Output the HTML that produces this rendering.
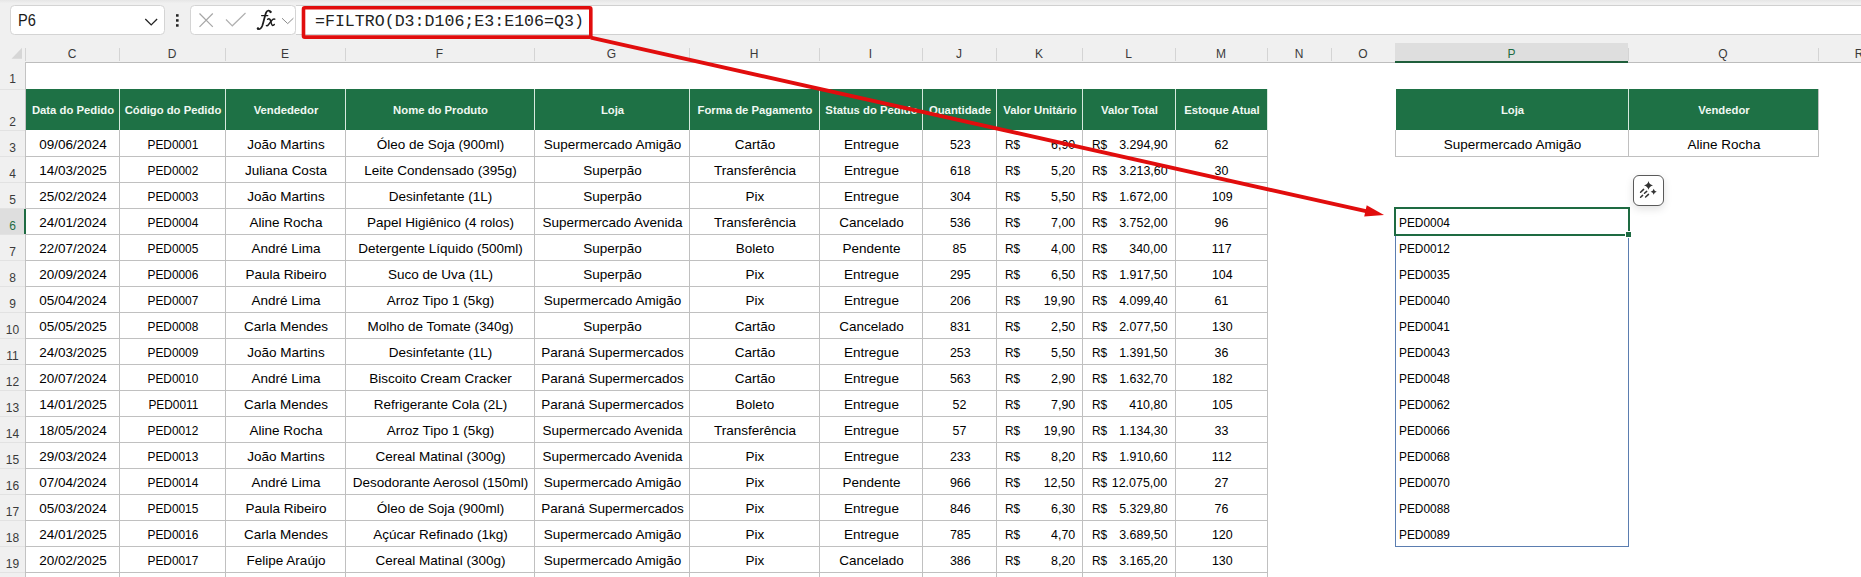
<!DOCTYPE html>
<html><head><meta charset="utf-8"><style>
*{margin:0;padding:0;box-sizing:border-box}
html,body{width:1861px;height:577px;overflow:hidden;background:#fff}
body{position:relative;font-family:"Liberation Sans",sans-serif}
div{position:absolute}
.t{font-size:13.5px;color:#000;white-space:nowrap}
.c{text-align:center}
.h{font-size:11.3px;font-weight:bold;color:#f0f8f2;white-space:nowrap}
.ch{font-size:12px;color:#3a3a3a;white-space:nowrap;text-align:center}
</style></head>
<body>
<div style="left:0;top:0;width:1861px;height:62px;background:#f0f0f0"></div>
<div style="left:0;top:0;width:1861px;height:3px;background:linear-gradient(#e6e6e6,#efefef)"></div>
<div style="left:10px;top:5px;width:154.7px;height:29.5px;background:#fff;border:1px solid #d4d4d4;border-radius:4.5px"></div>
<div style="left:17.5px;top:5.5px;height:29px;line-height:29px;font-size:16px;color:#1a1a1a;white-space:nowrap"><span style="display:inline-block;transform:scaleX(0.91);transform-origin:0 50%">P6</span></div>
<div style="left:189.8px;top:5.3px;width:106.7px;height:29.3px;background:#fff;border:1px solid #d4d4d4;border-radius:4.5px"></div>
<div style="left:296px;top:5px;width:1570px;height:30px;background:#fff;border-top:1px solid #d0d0d0;border-bottom:1px solid #d0d0d0"></div>
<svg style="position:absolute;left:0;top:0" width="310" height="40">
<polyline points="145.3,19 151.2,24.9 157.1,19" fill="none" stroke="#222" stroke-width="1.3"/>
<rect x="176" y="14.2" width="2.6" height="2.5" fill="#222"/>
<rect x="176" y="19.2" width="2.6" height="2.5" fill="#222"/>
<rect x="176" y="24.2" width="2.6" height="2.5" fill="#222"/>
<line x1="199.5" y1="13.5" x2="212.8" y2="26.8" stroke="#a6a6a6" stroke-width="1.2"/>
<line x1="212.8" y1="13.5" x2="199.5" y2="26.8" stroke="#a6a6a6" stroke-width="1.2"/>
<polyline points="226,19.5 232.3,25.8 245.5,13" fill="none" stroke="#b0b0b0" stroke-width="1.2"/>
<polyline points="282,18.2 287.7,23.6 293.4,18.2" fill="none" stroke="#8a8a8a" stroke-width="1"/>
</svg>
<svg style="position:absolute;left:0;top:0" width="300" height="40"><g fill="none" stroke="#1c1c1c" stroke-linecap="round">
<path d="M270.6,11.8 C269.6,10 267.2,10.1 266.2,12.3 C265,15 263.6,22 262.3,25.8 C261.3,28.5 259.6,29.7 257.8,28.7" stroke-width="1.75"/>
<path d="M261.6,15.6 L267.8,15.6" stroke-width="1.3"/>
<path d="M267.6,19.3 C269.4,18 270.3,19.4 270.8,21.5 C271.3,23.8 271.8,25.6 273,25.4 C273.6,25.3 274,24.9 274.3,24.4" stroke-width="1.45"/>
<path d="M274.8,19.2 C273.6,18.6 272.6,19.3 271.5,20.8 L268.6,24.5 C267.9,25.5 267.2,25.9 266.4,25.6" stroke-width="1.45"/>
</g><circle cx="270.5" cy="12" r="1.15" fill="#1c1c1c"/><circle cx="258" cy="28.5" r="1.2" fill="#1c1c1c"/></svg>
<div style="left:315px;top:7px;height:30px;line-height:30px;font-family:'Liberation Mono',monospace;font-size:16.6px;color:#222;white-space:nowrap">=FILTRO(D3:D106;E3:E106=Q3)</div>
<div style="left:0;top:61.5px;width:1861px;height:1px;background:#bdbdbd"></div>
<svg style="position:absolute;left:0;top:40px" width="26" height="22"><polygon points="11.5,18.8 22,18.8 22,7.8" fill="#d6d6d6"/></svg>
<div style="left:0;top:63px;width:2px;height:1px;background:#333"></div>
<div style="left:119px;top:48px;width:1px;height:13px;background:#d4d4d4"></div>
<div style="left:225px;top:48px;width:1px;height:13px;background:#d4d4d4"></div>
<div style="left:345px;top:48px;width:1px;height:13px;background:#d4d4d4"></div>
<div style="left:534px;top:48px;width:1px;height:13px;background:#d4d4d4"></div>
<div style="left:689px;top:48px;width:1px;height:13px;background:#d4d4d4"></div>
<div style="left:819px;top:48px;width:1px;height:13px;background:#d4d4d4"></div>
<div style="left:922px;top:48px;width:1px;height:13px;background:#d4d4d4"></div>
<div style="left:996px;top:48px;width:1px;height:13px;background:#d4d4d4"></div>
<div style="left:1082px;top:48px;width:1px;height:13px;background:#d4d4d4"></div>
<div style="left:1175px;top:48px;width:1px;height:13px;background:#d4d4d4"></div>
<div style="left:1267px;top:48px;width:1px;height:13px;background:#d4d4d4"></div>
<div style="left:1331px;top:48px;width:1px;height:13px;background:#d4d4d4"></div>
<div style="left:1395px;top:48px;width:1px;height:13px;background:#d4d4d4"></div>
<div style="left:1628px;top:48px;width:1px;height:13px;background:#d4d4d4"></div>
<div style="left:1818px;top:48px;width:1px;height:13px;background:#d4d4d4"></div>
<div style="left:1900px;top:48px;width:1px;height:13px;background:#d4d4d4"></div>
<div style="left:1395px;top:43px;width:233px;height:19px;background:#dedede"></div>
<div style="left:1395px;top:60.5px;width:233px;height:2px;background:#1f5e3b"></div>
<div style="left:25px;top:48px;width:1px;height:13px;background:#d4d4d4"></div>
<div class="ch" style="left:25px;top:43px;width:94px;height:19px;line-height:23px;color:#3a3a3a">C</div>
<div class="ch" style="left:119px;top:43px;width:106px;height:19px;line-height:23px;color:#3a3a3a">D</div>
<div class="ch" style="left:225px;top:43px;width:120px;height:19px;line-height:23px;color:#3a3a3a">E</div>
<div class="ch" style="left:345px;top:43px;width:189px;height:19px;line-height:23px;color:#3a3a3a">F</div>
<div class="ch" style="left:534px;top:43px;width:155px;height:19px;line-height:23px;color:#3a3a3a">G</div>
<div class="ch" style="left:689px;top:43px;width:130px;height:19px;line-height:23px;color:#3a3a3a">H</div>
<div class="ch" style="left:819px;top:43px;width:103px;height:19px;line-height:23px;color:#3a3a3a">I</div>
<div class="ch" style="left:922px;top:43px;width:74px;height:19px;line-height:23px;color:#3a3a3a">J</div>
<div class="ch" style="left:996px;top:43px;width:86px;height:19px;line-height:23px;color:#3a3a3a">K</div>
<div class="ch" style="left:1082px;top:43px;width:93px;height:19px;line-height:23px;color:#3a3a3a">L</div>
<div class="ch" style="left:1175px;top:43px;width:92px;height:19px;line-height:23px;color:#3a3a3a">M</div>
<div class="ch" style="left:1267px;top:43px;width:64px;height:19px;line-height:23px;color:#3a3a3a">N</div>
<div class="ch" style="left:1331px;top:43px;width:64px;height:19px;line-height:23px;color:#3a3a3a">O</div>
<div class="ch" style="left:1395px;top:43px;width:233px;height:19px;line-height:23px;color:#1e6b42">P</div>
<div class="ch" style="left:1628px;top:43px;width:190px;height:19px;line-height:23px;color:#3a3a3a">Q</div>
<div class="ch" style="left:1818px;top:43px;width:82px;height:19px;line-height:23px;color:#3a3a3a">R</div>
<div style="left:0;top:62px;width:25px;height:515px;background:#f0f0f0"></div>
<div style="left:25px;top:62px;width:1px;height:515px;background:#c3c3c3"></div>
<div style="left:0;top:208px;width:24px;height:26px;background:#dedede"></div>
<div style="left:24px;top:208px;width:2px;height:26.5px;background:#1e6b42"></div>
<div style="left:0;top:89px;width:25px;height:1px;background:#e2e2e2"></div>
<div class="ch" style="left:0;top:71.4px;width:25px;height:16px;line-height:16px;color:#3a3a3a">1</div>
<div style="left:0;top:130px;width:25px;height:1px;background:#e2e2e2"></div>
<div class="ch" style="left:0;top:113.9px;width:25px;height:16px;line-height:16px;color:#3a3a3a">2</div>
<div style="left:0;top:156px;width:25px;height:1px;background:#e2e2e2"></div>
<div class="ch" style="left:0;top:139.9px;width:25px;height:16px;line-height:16px;color:#3a3a3a">3</div>
<div style="left:0;top:182px;width:25px;height:1px;background:#e2e2e2"></div>
<div class="ch" style="left:0;top:165.9px;width:25px;height:16px;line-height:16px;color:#3a3a3a">4</div>
<div style="left:0;top:208px;width:25px;height:1px;background:#e2e2e2"></div>
<div class="ch" style="left:0;top:191.9px;width:25px;height:16px;line-height:16px;color:#3a3a3a">5</div>
<div style="left:0;top:234px;width:25px;height:1px;background:#e2e2e2"></div>
<div class="ch" style="left:0;top:217.9px;width:25px;height:16px;line-height:16px;color:#1e6b42">6</div>
<div style="left:0;top:260px;width:25px;height:1px;background:#e2e2e2"></div>
<div class="ch" style="left:0;top:243.9px;width:25px;height:16px;line-height:16px;color:#3a3a3a">7</div>
<div style="left:0;top:286px;width:25px;height:1px;background:#e2e2e2"></div>
<div class="ch" style="left:0;top:269.9px;width:25px;height:16px;line-height:16px;color:#3a3a3a">8</div>
<div style="left:0;top:312px;width:25px;height:1px;background:#e2e2e2"></div>
<div class="ch" style="left:0;top:295.9px;width:25px;height:16px;line-height:16px;color:#3a3a3a">9</div>
<div style="left:0;top:338px;width:25px;height:1px;background:#e2e2e2"></div>
<div class="ch" style="left:0;top:321.9px;width:25px;height:16px;line-height:16px;color:#3a3a3a">10</div>
<div style="left:0;top:364px;width:25px;height:1px;background:#e2e2e2"></div>
<div class="ch" style="left:0;top:347.9px;width:25px;height:16px;line-height:16px;color:#3a3a3a">11</div>
<div style="left:0;top:390px;width:25px;height:1px;background:#e2e2e2"></div>
<div class="ch" style="left:0;top:373.9px;width:25px;height:16px;line-height:16px;color:#3a3a3a">12</div>
<div style="left:0;top:416px;width:25px;height:1px;background:#e2e2e2"></div>
<div class="ch" style="left:0;top:399.9px;width:25px;height:16px;line-height:16px;color:#3a3a3a">13</div>
<div style="left:0;top:442px;width:25px;height:1px;background:#e2e2e2"></div>
<div class="ch" style="left:0;top:425.9px;width:25px;height:16px;line-height:16px;color:#3a3a3a">14</div>
<div style="left:0;top:468px;width:25px;height:1px;background:#e2e2e2"></div>
<div class="ch" style="left:0;top:451.9px;width:25px;height:16px;line-height:16px;color:#3a3a3a">15</div>
<div style="left:0;top:494px;width:25px;height:1px;background:#e2e2e2"></div>
<div class="ch" style="left:0;top:477.9px;width:25px;height:16px;line-height:16px;color:#3a3a3a">16</div>
<div style="left:0;top:520px;width:25px;height:1px;background:#e2e2e2"></div>
<div class="ch" style="left:0;top:503.9px;width:25px;height:16px;line-height:16px;color:#3a3a3a">17</div>
<div style="left:0;top:546px;width:25px;height:1px;background:#e2e2e2"></div>
<div class="ch" style="left:0;top:529.9px;width:25px;height:16px;line-height:16px;color:#3a3a3a">18</div>
<div style="left:0;top:572px;width:25px;height:1px;background:#e2e2e2"></div>
<div class="ch" style="left:0;top:555.9px;width:25px;height:16px;line-height:16px;color:#3a3a3a">19</div>
<div style="left:0;top:598px;width:25px;height:1px;background:#e2e2e2"></div>
<div class="ch" style="left:0;top:581.9px;width:25px;height:16px;line-height:16px;color:#3a3a3a">20</div>
<div style="left:25.5px;top:89px;width:1242px;height:41px;background:#1e7145"></div>
<div style="left:25px;top:156px;width:1243px;height:1px;background:#c0c0c0"></div>
<div style="left:25px;top:182px;width:1243px;height:1px;background:#c0c0c0"></div>
<div style="left:25px;top:208px;width:1243px;height:1px;background:#c0c0c0"></div>
<div style="left:25px;top:234px;width:1243px;height:1px;background:#c0c0c0"></div>
<div style="left:25px;top:260px;width:1243px;height:1px;background:#c0c0c0"></div>
<div style="left:25px;top:286px;width:1243px;height:1px;background:#c0c0c0"></div>
<div style="left:25px;top:312px;width:1243px;height:1px;background:#c0c0c0"></div>
<div style="left:25px;top:338px;width:1243px;height:1px;background:#c0c0c0"></div>
<div style="left:25px;top:364px;width:1243px;height:1px;background:#c0c0c0"></div>
<div style="left:25px;top:390px;width:1243px;height:1px;background:#c0c0c0"></div>
<div style="left:25px;top:416px;width:1243px;height:1px;background:#c0c0c0"></div>
<div style="left:25px;top:442px;width:1243px;height:1px;background:#c0c0c0"></div>
<div style="left:25px;top:468px;width:1243px;height:1px;background:#c0c0c0"></div>
<div style="left:25px;top:494px;width:1243px;height:1px;background:#c0c0c0"></div>
<div style="left:25px;top:520px;width:1243px;height:1px;background:#c0c0c0"></div>
<div style="left:25px;top:546px;width:1243px;height:1px;background:#c0c0c0"></div>
<div style="left:25px;top:572px;width:1243px;height:1px;background:#c0c0c0"></div>
<div style="left:25px;top:598px;width:1243px;height:1px;background:#c0c0c0"></div>
<div style="left:119px;top:130px;width:1px;height:450px;background:#c0c0c0"></div>
<div style="left:119px;top:89px;width:1px;height:41px;background:#d7e9de"></div>
<div style="left:225px;top:130px;width:1px;height:450px;background:#c0c0c0"></div>
<div style="left:225px;top:89px;width:1px;height:41px;background:#d7e9de"></div>
<div style="left:345px;top:130px;width:1px;height:450px;background:#c0c0c0"></div>
<div style="left:345px;top:89px;width:1px;height:41px;background:#d7e9de"></div>
<div style="left:534px;top:130px;width:1px;height:450px;background:#c0c0c0"></div>
<div style="left:534px;top:89px;width:1px;height:41px;background:#d7e9de"></div>
<div style="left:689px;top:130px;width:1px;height:450px;background:#c0c0c0"></div>
<div style="left:689px;top:89px;width:1px;height:41px;background:#d7e9de"></div>
<div style="left:819px;top:130px;width:1px;height:450px;background:#c0c0c0"></div>
<div style="left:819px;top:89px;width:1px;height:41px;background:#d7e9de"></div>
<div style="left:922px;top:130px;width:1px;height:450px;background:#c0c0c0"></div>
<div style="left:922px;top:89px;width:1px;height:41px;background:#d7e9de"></div>
<div style="left:996px;top:130px;width:1px;height:450px;background:#c0c0c0"></div>
<div style="left:996px;top:89px;width:1px;height:41px;background:#d7e9de"></div>
<div style="left:1082px;top:130px;width:1px;height:450px;background:#c0c0c0"></div>
<div style="left:1082px;top:89px;width:1px;height:41px;background:#d7e9de"></div>
<div style="left:1175px;top:130px;width:1px;height:450px;background:#c0c0c0"></div>
<div style="left:1175px;top:89px;width:1px;height:41px;background:#d7e9de"></div>
<div style="left:1267px;top:130px;width:1px;height:450px;background:#c0c0c0"></div>
<div style="left:1267px;top:89px;width:1px;height:41px;background:#d7e9de"></div>
<div class="h c" style="left:26px;top:90px;width:94px;height:41px;line-height:41px">Data do Pedido</div>
<div class="h c" style="left:120px;top:90px;width:106px;height:41px;line-height:41px">Código do Pedido</div>
<div class="h c" style="left:226px;top:90px;width:120px;height:41px;line-height:41px">Vendededor</div>
<div class="h c" style="left:346px;top:90px;width:189px;height:41px;line-height:41px">Nome do Produto</div>
<div class="h c" style="left:535px;top:90px;width:155px;height:41px;line-height:41px">Loja</div>
<div class="h c" style="left:690px;top:90px;width:130px;height:41px;line-height:41px">Forma de Pagamento</div>
<div class="h c" style="left:820px;top:90px;width:103px;height:41px;line-height:41px">Status do Pedido</div>
<div class="h c" style="left:923px;top:90px;width:74px;height:41px;line-height:41px">Quantidade</div>
<div class="h c" style="left:997px;top:90px;width:86px;height:41px;line-height:41px">Valor Unitário</div>
<div class="h c" style="left:1083px;top:90px;width:93px;height:41px;line-height:41px">Valor Total</div>
<div class="h c" style="left:1176px;top:90px;width:92px;height:41px;line-height:41px">Estoque Atual</div>
<div class="t c" style="left:26px;top:132.1px;width:94px;height:26px;line-height:26px;">09/06/2024</div>
<div class="t c" style="left:120px;top:132.1px;width:106px;height:26px;line-height:26px;"><span style="display:inline-block;transform:scaleX(0.88);transform-origin:50% 50%">PED0001</span></div>
<div class="t c" style="left:226px;top:132.1px;width:120px;height:26px;line-height:26px;">João Martins</div>
<div class="t c" style="left:346px;top:132.1px;width:189px;height:26px;line-height:26px;">Óleo de Soja (900ml)</div>
<div class="t c" style="left:535px;top:132.1px;width:155px;height:26px;line-height:26px;">Supermercado Amigão</div>
<div class="t c" style="left:690px;top:132.1px;width:130px;height:26px;line-height:26px;">Cartão</div>
<div class="t c" style="left:820px;top:132.1px;width:103px;height:26px;line-height:26px;">Entregue</div>
<div class="t c" style="left:923px;top:132.1px;width:74px;height:26px;line-height:26px;"><span style="display:inline-block;transform:scaleX(0.92);transform-origin:50% 50%">523</span></div>
<div class="t" style="left:1005px;top:132.1px;height:26px;line-height:26px;"><span style="display:inline-block;transform:scaleX(0.88);transform-origin:0 50%">R$</span></div>
<div class="t" style="right:786px;top:132.1px;height:26px;line-height:26px;text-align:right;"><span style="display:inline-block;transform:scaleX(0.92);transform-origin:100% 50%">6,90</span></div>
<div class="t" style="left:1091.5px;top:132.1px;height:26px;line-height:26px;"><span style="display:inline-block;transform:scaleX(0.88);transform-origin:0 50%">R$</span></div>
<div class="t" style="right:693.5px;top:132.1px;height:26px;line-height:26px;text-align:right;"><span style="display:inline-block;transform:scaleX(0.92);transform-origin:100% 50%">3.294,90</span></div>
<div class="t c" style="left:1176px;top:132.1px;width:92px;height:26px;line-height:26px;"><span style="display:inline-block;transform:scaleX(0.92);transform-origin:50% 50%">62</span></div>
<div class="t c" style="left:26px;top:158.1px;width:94px;height:26px;line-height:26px;">14/03/2025</div>
<div class="t c" style="left:120px;top:158.1px;width:106px;height:26px;line-height:26px;"><span style="display:inline-block;transform:scaleX(0.88);transform-origin:50% 50%">PED0002</span></div>
<div class="t c" style="left:226px;top:158.1px;width:120px;height:26px;line-height:26px;">Juliana Costa</div>
<div class="t c" style="left:346px;top:158.1px;width:189px;height:26px;line-height:26px;">Leite Condensado (395g)</div>
<div class="t c" style="left:535px;top:158.1px;width:155px;height:26px;line-height:26px;">Superpão</div>
<div class="t c" style="left:690px;top:158.1px;width:130px;height:26px;line-height:26px;">Transferência</div>
<div class="t c" style="left:820px;top:158.1px;width:103px;height:26px;line-height:26px;">Entregue</div>
<div class="t c" style="left:923px;top:158.1px;width:74px;height:26px;line-height:26px;"><span style="display:inline-block;transform:scaleX(0.92);transform-origin:50% 50%">618</span></div>
<div class="t" style="left:1005px;top:158.1px;height:26px;line-height:26px;"><span style="display:inline-block;transform:scaleX(0.88);transform-origin:0 50%">R$</span></div>
<div class="t" style="right:786px;top:158.1px;height:26px;line-height:26px;text-align:right;"><span style="display:inline-block;transform:scaleX(0.92);transform-origin:100% 50%">5,20</span></div>
<div class="t" style="left:1091.5px;top:158.1px;height:26px;line-height:26px;"><span style="display:inline-block;transform:scaleX(0.88);transform-origin:0 50%">R$</span></div>
<div class="t" style="right:693.5px;top:158.1px;height:26px;line-height:26px;text-align:right;"><span style="display:inline-block;transform:scaleX(0.92);transform-origin:100% 50%">3.213,60</span></div>
<div class="t c" style="left:1176px;top:158.1px;width:92px;height:26px;line-height:26px;"><span style="display:inline-block;transform:scaleX(0.92);transform-origin:50% 50%">30</span></div>
<div class="t c" style="left:26px;top:184.1px;width:94px;height:26px;line-height:26px;">25/02/2024</div>
<div class="t c" style="left:120px;top:184.1px;width:106px;height:26px;line-height:26px;"><span style="display:inline-block;transform:scaleX(0.88);transform-origin:50% 50%">PED0003</span></div>
<div class="t c" style="left:226px;top:184.1px;width:120px;height:26px;line-height:26px;">João Martins</div>
<div class="t c" style="left:346px;top:184.1px;width:189px;height:26px;line-height:26px;">Desinfetante (1L)</div>
<div class="t c" style="left:535px;top:184.1px;width:155px;height:26px;line-height:26px;">Superpão</div>
<div class="t c" style="left:690px;top:184.1px;width:130px;height:26px;line-height:26px;">Pix</div>
<div class="t c" style="left:820px;top:184.1px;width:103px;height:26px;line-height:26px;">Entregue</div>
<div class="t c" style="left:923px;top:184.1px;width:74px;height:26px;line-height:26px;"><span style="display:inline-block;transform:scaleX(0.92);transform-origin:50% 50%">304</span></div>
<div class="t" style="left:1005px;top:184.1px;height:26px;line-height:26px;"><span style="display:inline-block;transform:scaleX(0.88);transform-origin:0 50%">R$</span></div>
<div class="t" style="right:786px;top:184.1px;height:26px;line-height:26px;text-align:right;"><span style="display:inline-block;transform:scaleX(0.92);transform-origin:100% 50%">5,50</span></div>
<div class="t" style="left:1091.5px;top:184.1px;height:26px;line-height:26px;"><span style="display:inline-block;transform:scaleX(0.88);transform-origin:0 50%">R$</span></div>
<div class="t" style="right:693.5px;top:184.1px;height:26px;line-height:26px;text-align:right;"><span style="display:inline-block;transform:scaleX(0.92);transform-origin:100% 50%">1.672,00</span></div>
<div class="t c" style="left:1176px;top:184.1px;width:92px;height:26px;line-height:26px;"><span style="display:inline-block;transform:scaleX(0.92);transform-origin:50% 50%">109</span></div>
<div class="t c" style="left:26px;top:210.1px;width:94px;height:26px;line-height:26px;">24/01/2024</div>
<div class="t c" style="left:120px;top:210.1px;width:106px;height:26px;line-height:26px;"><span style="display:inline-block;transform:scaleX(0.88);transform-origin:50% 50%">PED0004</span></div>
<div class="t c" style="left:226px;top:210.1px;width:120px;height:26px;line-height:26px;">Aline Rocha</div>
<div class="t c" style="left:346px;top:210.1px;width:189px;height:26px;line-height:26px;">Papel Higiênico (4 rolos)</div>
<div class="t c" style="left:535px;top:210.1px;width:155px;height:26px;line-height:26px;">Supermercado Avenida</div>
<div class="t c" style="left:690px;top:210.1px;width:130px;height:26px;line-height:26px;">Transferência</div>
<div class="t c" style="left:820px;top:210.1px;width:103px;height:26px;line-height:26px;">Cancelado</div>
<div class="t c" style="left:923px;top:210.1px;width:74px;height:26px;line-height:26px;"><span style="display:inline-block;transform:scaleX(0.92);transform-origin:50% 50%">536</span></div>
<div class="t" style="left:1005px;top:210.1px;height:26px;line-height:26px;"><span style="display:inline-block;transform:scaleX(0.88);transform-origin:0 50%">R$</span></div>
<div class="t" style="right:786px;top:210.1px;height:26px;line-height:26px;text-align:right;"><span style="display:inline-block;transform:scaleX(0.92);transform-origin:100% 50%">7,00</span></div>
<div class="t" style="left:1091.5px;top:210.1px;height:26px;line-height:26px;"><span style="display:inline-block;transform:scaleX(0.88);transform-origin:0 50%">R$</span></div>
<div class="t" style="right:693.5px;top:210.1px;height:26px;line-height:26px;text-align:right;"><span style="display:inline-block;transform:scaleX(0.92);transform-origin:100% 50%">3.752,00</span></div>
<div class="t c" style="left:1176px;top:210.1px;width:92px;height:26px;line-height:26px;"><span style="display:inline-block;transform:scaleX(0.92);transform-origin:50% 50%">96</span></div>
<div class="t c" style="left:26px;top:236.1px;width:94px;height:26px;line-height:26px;">22/07/2024</div>
<div class="t c" style="left:120px;top:236.1px;width:106px;height:26px;line-height:26px;"><span style="display:inline-block;transform:scaleX(0.88);transform-origin:50% 50%">PED0005</span></div>
<div class="t c" style="left:226px;top:236.1px;width:120px;height:26px;line-height:26px;">André Lima</div>
<div class="t c" style="left:346px;top:236.1px;width:189px;height:26px;line-height:26px;">Detergente Líquido (500ml)</div>
<div class="t c" style="left:535px;top:236.1px;width:155px;height:26px;line-height:26px;">Superpão</div>
<div class="t c" style="left:690px;top:236.1px;width:130px;height:26px;line-height:26px;">Boleto</div>
<div class="t c" style="left:820px;top:236.1px;width:103px;height:26px;line-height:26px;">Pendente</div>
<div class="t c" style="left:923px;top:236.1px;width:74px;height:26px;line-height:26px;"><span style="display:inline-block;transform:scaleX(0.92);transform-origin:50% 50%">85</span></div>
<div class="t" style="left:1005px;top:236.1px;height:26px;line-height:26px;"><span style="display:inline-block;transform:scaleX(0.88);transform-origin:0 50%">R$</span></div>
<div class="t" style="right:786px;top:236.1px;height:26px;line-height:26px;text-align:right;"><span style="display:inline-block;transform:scaleX(0.92);transform-origin:100% 50%">4,00</span></div>
<div class="t" style="left:1091.5px;top:236.1px;height:26px;line-height:26px;"><span style="display:inline-block;transform:scaleX(0.88);transform-origin:0 50%">R$</span></div>
<div class="t" style="right:693.5px;top:236.1px;height:26px;line-height:26px;text-align:right;"><span style="display:inline-block;transform:scaleX(0.92);transform-origin:100% 50%">340,00</span></div>
<div class="t c" style="left:1176px;top:236.1px;width:92px;height:26px;line-height:26px;"><span style="display:inline-block;transform:scaleX(0.92);transform-origin:50% 50%">117</span></div>
<div class="t c" style="left:26px;top:262.1px;width:94px;height:26px;line-height:26px;">20/09/2024</div>
<div class="t c" style="left:120px;top:262.1px;width:106px;height:26px;line-height:26px;"><span style="display:inline-block;transform:scaleX(0.88);transform-origin:50% 50%">PED0006</span></div>
<div class="t c" style="left:226px;top:262.1px;width:120px;height:26px;line-height:26px;">Paula Ribeiro</div>
<div class="t c" style="left:346px;top:262.1px;width:189px;height:26px;line-height:26px;">Suco de Uva (1L)</div>
<div class="t c" style="left:535px;top:262.1px;width:155px;height:26px;line-height:26px;">Superpão</div>
<div class="t c" style="left:690px;top:262.1px;width:130px;height:26px;line-height:26px;">Pix</div>
<div class="t c" style="left:820px;top:262.1px;width:103px;height:26px;line-height:26px;">Entregue</div>
<div class="t c" style="left:923px;top:262.1px;width:74px;height:26px;line-height:26px;"><span style="display:inline-block;transform:scaleX(0.92);transform-origin:50% 50%">295</span></div>
<div class="t" style="left:1005px;top:262.1px;height:26px;line-height:26px;"><span style="display:inline-block;transform:scaleX(0.88);transform-origin:0 50%">R$</span></div>
<div class="t" style="right:786px;top:262.1px;height:26px;line-height:26px;text-align:right;"><span style="display:inline-block;transform:scaleX(0.92);transform-origin:100% 50%">6,50</span></div>
<div class="t" style="left:1091.5px;top:262.1px;height:26px;line-height:26px;"><span style="display:inline-block;transform:scaleX(0.88);transform-origin:0 50%">R$</span></div>
<div class="t" style="right:693.5px;top:262.1px;height:26px;line-height:26px;text-align:right;"><span style="display:inline-block;transform:scaleX(0.92);transform-origin:100% 50%">1.917,50</span></div>
<div class="t c" style="left:1176px;top:262.1px;width:92px;height:26px;line-height:26px;"><span style="display:inline-block;transform:scaleX(0.92);transform-origin:50% 50%">104</span></div>
<div class="t c" style="left:26px;top:288.1px;width:94px;height:26px;line-height:26px;">05/04/2024</div>
<div class="t c" style="left:120px;top:288.1px;width:106px;height:26px;line-height:26px;"><span style="display:inline-block;transform:scaleX(0.88);transform-origin:50% 50%">PED0007</span></div>
<div class="t c" style="left:226px;top:288.1px;width:120px;height:26px;line-height:26px;">André Lima</div>
<div class="t c" style="left:346px;top:288.1px;width:189px;height:26px;line-height:26px;">Arroz Tipo 1 (5kg)</div>
<div class="t c" style="left:535px;top:288.1px;width:155px;height:26px;line-height:26px;">Supermercado Amigão</div>
<div class="t c" style="left:690px;top:288.1px;width:130px;height:26px;line-height:26px;">Pix</div>
<div class="t c" style="left:820px;top:288.1px;width:103px;height:26px;line-height:26px;">Entregue</div>
<div class="t c" style="left:923px;top:288.1px;width:74px;height:26px;line-height:26px;"><span style="display:inline-block;transform:scaleX(0.92);transform-origin:50% 50%">206</span></div>
<div class="t" style="left:1005px;top:288.1px;height:26px;line-height:26px;"><span style="display:inline-block;transform:scaleX(0.88);transform-origin:0 50%">R$</span></div>
<div class="t" style="right:786px;top:288.1px;height:26px;line-height:26px;text-align:right;"><span style="display:inline-block;transform:scaleX(0.92);transform-origin:100% 50%">19,90</span></div>
<div class="t" style="left:1091.5px;top:288.1px;height:26px;line-height:26px;"><span style="display:inline-block;transform:scaleX(0.88);transform-origin:0 50%">R$</span></div>
<div class="t" style="right:693.5px;top:288.1px;height:26px;line-height:26px;text-align:right;"><span style="display:inline-block;transform:scaleX(0.92);transform-origin:100% 50%">4.099,40</span></div>
<div class="t c" style="left:1176px;top:288.1px;width:92px;height:26px;line-height:26px;"><span style="display:inline-block;transform:scaleX(0.92);transform-origin:50% 50%">61</span></div>
<div class="t c" style="left:26px;top:314.1px;width:94px;height:26px;line-height:26px;">05/05/2025</div>
<div class="t c" style="left:120px;top:314.1px;width:106px;height:26px;line-height:26px;"><span style="display:inline-block;transform:scaleX(0.88);transform-origin:50% 50%">PED0008</span></div>
<div class="t c" style="left:226px;top:314.1px;width:120px;height:26px;line-height:26px;">Carla Mendes</div>
<div class="t c" style="left:346px;top:314.1px;width:189px;height:26px;line-height:26px;">Molho de Tomate (340g)</div>
<div class="t c" style="left:535px;top:314.1px;width:155px;height:26px;line-height:26px;">Superpão</div>
<div class="t c" style="left:690px;top:314.1px;width:130px;height:26px;line-height:26px;">Cartão</div>
<div class="t c" style="left:820px;top:314.1px;width:103px;height:26px;line-height:26px;">Cancelado</div>
<div class="t c" style="left:923px;top:314.1px;width:74px;height:26px;line-height:26px;"><span style="display:inline-block;transform:scaleX(0.92);transform-origin:50% 50%">831</span></div>
<div class="t" style="left:1005px;top:314.1px;height:26px;line-height:26px;"><span style="display:inline-block;transform:scaleX(0.88);transform-origin:0 50%">R$</span></div>
<div class="t" style="right:786px;top:314.1px;height:26px;line-height:26px;text-align:right;"><span style="display:inline-block;transform:scaleX(0.92);transform-origin:100% 50%">2,50</span></div>
<div class="t" style="left:1091.5px;top:314.1px;height:26px;line-height:26px;"><span style="display:inline-block;transform:scaleX(0.88);transform-origin:0 50%">R$</span></div>
<div class="t" style="right:693.5px;top:314.1px;height:26px;line-height:26px;text-align:right;"><span style="display:inline-block;transform:scaleX(0.92);transform-origin:100% 50%">2.077,50</span></div>
<div class="t c" style="left:1176px;top:314.1px;width:92px;height:26px;line-height:26px;"><span style="display:inline-block;transform:scaleX(0.92);transform-origin:50% 50%">130</span></div>
<div class="t c" style="left:26px;top:340.1px;width:94px;height:26px;line-height:26px;">24/03/2025</div>
<div class="t c" style="left:120px;top:340.1px;width:106px;height:26px;line-height:26px;"><span style="display:inline-block;transform:scaleX(0.88);transform-origin:50% 50%">PED0009</span></div>
<div class="t c" style="left:226px;top:340.1px;width:120px;height:26px;line-height:26px;">João Martins</div>
<div class="t c" style="left:346px;top:340.1px;width:189px;height:26px;line-height:26px;">Desinfetante (1L)</div>
<div class="t c" style="left:535px;top:340.1px;width:155px;height:26px;line-height:26px;">Paraná Supermercados</div>
<div class="t c" style="left:690px;top:340.1px;width:130px;height:26px;line-height:26px;">Cartão</div>
<div class="t c" style="left:820px;top:340.1px;width:103px;height:26px;line-height:26px;">Entregue</div>
<div class="t c" style="left:923px;top:340.1px;width:74px;height:26px;line-height:26px;"><span style="display:inline-block;transform:scaleX(0.92);transform-origin:50% 50%">253</span></div>
<div class="t" style="left:1005px;top:340.1px;height:26px;line-height:26px;"><span style="display:inline-block;transform:scaleX(0.88);transform-origin:0 50%">R$</span></div>
<div class="t" style="right:786px;top:340.1px;height:26px;line-height:26px;text-align:right;"><span style="display:inline-block;transform:scaleX(0.92);transform-origin:100% 50%">5,50</span></div>
<div class="t" style="left:1091.5px;top:340.1px;height:26px;line-height:26px;"><span style="display:inline-block;transform:scaleX(0.88);transform-origin:0 50%">R$</span></div>
<div class="t" style="right:693.5px;top:340.1px;height:26px;line-height:26px;text-align:right;"><span style="display:inline-block;transform:scaleX(0.92);transform-origin:100% 50%">1.391,50</span></div>
<div class="t c" style="left:1176px;top:340.1px;width:92px;height:26px;line-height:26px;"><span style="display:inline-block;transform:scaleX(0.92);transform-origin:50% 50%">36</span></div>
<div class="t c" style="left:26px;top:366.1px;width:94px;height:26px;line-height:26px;">20/07/2024</div>
<div class="t c" style="left:120px;top:366.1px;width:106px;height:26px;line-height:26px;"><span style="display:inline-block;transform:scaleX(0.88);transform-origin:50% 50%">PED0010</span></div>
<div class="t c" style="left:226px;top:366.1px;width:120px;height:26px;line-height:26px;">André Lima</div>
<div class="t c" style="left:346px;top:366.1px;width:189px;height:26px;line-height:26px;">Biscoito Cream Cracker</div>
<div class="t c" style="left:535px;top:366.1px;width:155px;height:26px;line-height:26px;">Paraná Supermercados</div>
<div class="t c" style="left:690px;top:366.1px;width:130px;height:26px;line-height:26px;">Cartão</div>
<div class="t c" style="left:820px;top:366.1px;width:103px;height:26px;line-height:26px;">Entregue</div>
<div class="t c" style="left:923px;top:366.1px;width:74px;height:26px;line-height:26px;"><span style="display:inline-block;transform:scaleX(0.92);transform-origin:50% 50%">563</span></div>
<div class="t" style="left:1005px;top:366.1px;height:26px;line-height:26px;"><span style="display:inline-block;transform:scaleX(0.88);transform-origin:0 50%">R$</span></div>
<div class="t" style="right:786px;top:366.1px;height:26px;line-height:26px;text-align:right;"><span style="display:inline-block;transform:scaleX(0.92);transform-origin:100% 50%">2,90</span></div>
<div class="t" style="left:1091.5px;top:366.1px;height:26px;line-height:26px;"><span style="display:inline-block;transform:scaleX(0.88);transform-origin:0 50%">R$</span></div>
<div class="t" style="right:693.5px;top:366.1px;height:26px;line-height:26px;text-align:right;"><span style="display:inline-block;transform:scaleX(0.92);transform-origin:100% 50%">1.632,70</span></div>
<div class="t c" style="left:1176px;top:366.1px;width:92px;height:26px;line-height:26px;"><span style="display:inline-block;transform:scaleX(0.92);transform-origin:50% 50%">182</span></div>
<div class="t c" style="left:26px;top:392.1px;width:94px;height:26px;line-height:26px;">14/01/2025</div>
<div class="t c" style="left:120px;top:392.1px;width:106px;height:26px;line-height:26px;"><span style="display:inline-block;transform:scaleX(0.88);transform-origin:50% 50%">PED0011</span></div>
<div class="t c" style="left:226px;top:392.1px;width:120px;height:26px;line-height:26px;">Carla Mendes</div>
<div class="t c" style="left:346px;top:392.1px;width:189px;height:26px;line-height:26px;">Refrigerante Cola (2L)</div>
<div class="t c" style="left:535px;top:392.1px;width:155px;height:26px;line-height:26px;">Paraná Supermercados</div>
<div class="t c" style="left:690px;top:392.1px;width:130px;height:26px;line-height:26px;">Boleto</div>
<div class="t c" style="left:820px;top:392.1px;width:103px;height:26px;line-height:26px;">Entregue</div>
<div class="t c" style="left:923px;top:392.1px;width:74px;height:26px;line-height:26px;"><span style="display:inline-block;transform:scaleX(0.92);transform-origin:50% 50%">52</span></div>
<div class="t" style="left:1005px;top:392.1px;height:26px;line-height:26px;"><span style="display:inline-block;transform:scaleX(0.88);transform-origin:0 50%">R$</span></div>
<div class="t" style="right:786px;top:392.1px;height:26px;line-height:26px;text-align:right;"><span style="display:inline-block;transform:scaleX(0.92);transform-origin:100% 50%">7,90</span></div>
<div class="t" style="left:1091.5px;top:392.1px;height:26px;line-height:26px;"><span style="display:inline-block;transform:scaleX(0.88);transform-origin:0 50%">R$</span></div>
<div class="t" style="right:693.5px;top:392.1px;height:26px;line-height:26px;text-align:right;"><span style="display:inline-block;transform:scaleX(0.92);transform-origin:100% 50%">410,80</span></div>
<div class="t c" style="left:1176px;top:392.1px;width:92px;height:26px;line-height:26px;"><span style="display:inline-block;transform:scaleX(0.92);transform-origin:50% 50%">105</span></div>
<div class="t c" style="left:26px;top:418.1px;width:94px;height:26px;line-height:26px;">18/05/2024</div>
<div class="t c" style="left:120px;top:418.1px;width:106px;height:26px;line-height:26px;"><span style="display:inline-block;transform:scaleX(0.88);transform-origin:50% 50%">PED0012</span></div>
<div class="t c" style="left:226px;top:418.1px;width:120px;height:26px;line-height:26px;">Aline Rocha</div>
<div class="t c" style="left:346px;top:418.1px;width:189px;height:26px;line-height:26px;">Arroz Tipo 1 (5kg)</div>
<div class="t c" style="left:535px;top:418.1px;width:155px;height:26px;line-height:26px;">Supermercado Avenida</div>
<div class="t c" style="left:690px;top:418.1px;width:130px;height:26px;line-height:26px;">Transferência</div>
<div class="t c" style="left:820px;top:418.1px;width:103px;height:26px;line-height:26px;">Entregue</div>
<div class="t c" style="left:923px;top:418.1px;width:74px;height:26px;line-height:26px;"><span style="display:inline-block;transform:scaleX(0.92);transform-origin:50% 50%">57</span></div>
<div class="t" style="left:1005px;top:418.1px;height:26px;line-height:26px;"><span style="display:inline-block;transform:scaleX(0.88);transform-origin:0 50%">R$</span></div>
<div class="t" style="right:786px;top:418.1px;height:26px;line-height:26px;text-align:right;"><span style="display:inline-block;transform:scaleX(0.92);transform-origin:100% 50%">19,90</span></div>
<div class="t" style="left:1091.5px;top:418.1px;height:26px;line-height:26px;"><span style="display:inline-block;transform:scaleX(0.88);transform-origin:0 50%">R$</span></div>
<div class="t" style="right:693.5px;top:418.1px;height:26px;line-height:26px;text-align:right;"><span style="display:inline-block;transform:scaleX(0.92);transform-origin:100% 50%">1.134,30</span></div>
<div class="t c" style="left:1176px;top:418.1px;width:92px;height:26px;line-height:26px;"><span style="display:inline-block;transform:scaleX(0.92);transform-origin:50% 50%">33</span></div>
<div class="t c" style="left:26px;top:444.1px;width:94px;height:26px;line-height:26px;">29/03/2024</div>
<div class="t c" style="left:120px;top:444.1px;width:106px;height:26px;line-height:26px;"><span style="display:inline-block;transform:scaleX(0.88);transform-origin:50% 50%">PED0013</span></div>
<div class="t c" style="left:226px;top:444.1px;width:120px;height:26px;line-height:26px;">João Martins</div>
<div class="t c" style="left:346px;top:444.1px;width:189px;height:26px;line-height:26px;">Cereal Matinal (300g)</div>
<div class="t c" style="left:535px;top:444.1px;width:155px;height:26px;line-height:26px;">Supermercado Avenida</div>
<div class="t c" style="left:690px;top:444.1px;width:130px;height:26px;line-height:26px;">Pix</div>
<div class="t c" style="left:820px;top:444.1px;width:103px;height:26px;line-height:26px;">Entregue</div>
<div class="t c" style="left:923px;top:444.1px;width:74px;height:26px;line-height:26px;"><span style="display:inline-block;transform:scaleX(0.92);transform-origin:50% 50%">233</span></div>
<div class="t" style="left:1005px;top:444.1px;height:26px;line-height:26px;"><span style="display:inline-block;transform:scaleX(0.88);transform-origin:0 50%">R$</span></div>
<div class="t" style="right:786px;top:444.1px;height:26px;line-height:26px;text-align:right;"><span style="display:inline-block;transform:scaleX(0.92);transform-origin:100% 50%">8,20</span></div>
<div class="t" style="left:1091.5px;top:444.1px;height:26px;line-height:26px;"><span style="display:inline-block;transform:scaleX(0.88);transform-origin:0 50%">R$</span></div>
<div class="t" style="right:693.5px;top:444.1px;height:26px;line-height:26px;text-align:right;"><span style="display:inline-block;transform:scaleX(0.92);transform-origin:100% 50%">1.910,60</span></div>
<div class="t c" style="left:1176px;top:444.1px;width:92px;height:26px;line-height:26px;"><span style="display:inline-block;transform:scaleX(0.92);transform-origin:50% 50%">112</span></div>
<div class="t c" style="left:26px;top:470.1px;width:94px;height:26px;line-height:26px;">07/04/2024</div>
<div class="t c" style="left:120px;top:470.1px;width:106px;height:26px;line-height:26px;"><span style="display:inline-block;transform:scaleX(0.88);transform-origin:50% 50%">PED0014</span></div>
<div class="t c" style="left:226px;top:470.1px;width:120px;height:26px;line-height:26px;">André Lima</div>
<div class="t c" style="left:346px;top:470.1px;width:189px;height:26px;line-height:26px;">Desodorante Aerosol (150ml)</div>
<div class="t c" style="left:535px;top:470.1px;width:155px;height:26px;line-height:26px;">Supermercado Amigão</div>
<div class="t c" style="left:690px;top:470.1px;width:130px;height:26px;line-height:26px;">Pix</div>
<div class="t c" style="left:820px;top:470.1px;width:103px;height:26px;line-height:26px;">Pendente</div>
<div class="t c" style="left:923px;top:470.1px;width:74px;height:26px;line-height:26px;"><span style="display:inline-block;transform:scaleX(0.92);transform-origin:50% 50%">966</span></div>
<div class="t" style="left:1005px;top:470.1px;height:26px;line-height:26px;"><span style="display:inline-block;transform:scaleX(0.88);transform-origin:0 50%">R$</span></div>
<div class="t" style="right:786px;top:470.1px;height:26px;line-height:26px;text-align:right;"><span style="display:inline-block;transform:scaleX(0.92);transform-origin:100% 50%">12,50</span></div>
<div class="t" style="left:1091.5px;top:470.1px;height:26px;line-height:26px;"><span style="display:inline-block;transform:scaleX(0.88);transform-origin:0 50%">R$</span></div>
<div class="t" style="right:693.5px;top:470.1px;height:26px;line-height:26px;text-align:right;"><span style="display:inline-block;transform:scaleX(0.92);transform-origin:100% 50%">12.075,00</span></div>
<div class="t c" style="left:1176px;top:470.1px;width:92px;height:26px;line-height:26px;"><span style="display:inline-block;transform:scaleX(0.92);transform-origin:50% 50%">27</span></div>
<div class="t c" style="left:26px;top:496.1px;width:94px;height:26px;line-height:26px;">05/03/2024</div>
<div class="t c" style="left:120px;top:496.1px;width:106px;height:26px;line-height:26px;"><span style="display:inline-block;transform:scaleX(0.88);transform-origin:50% 50%">PED0015</span></div>
<div class="t c" style="left:226px;top:496.1px;width:120px;height:26px;line-height:26px;">Paula Ribeiro</div>
<div class="t c" style="left:346px;top:496.1px;width:189px;height:26px;line-height:26px;">Óleo de Soja (900ml)</div>
<div class="t c" style="left:535px;top:496.1px;width:155px;height:26px;line-height:26px;">Paraná Supermercados</div>
<div class="t c" style="left:690px;top:496.1px;width:130px;height:26px;line-height:26px;">Pix</div>
<div class="t c" style="left:820px;top:496.1px;width:103px;height:26px;line-height:26px;">Entregue</div>
<div class="t c" style="left:923px;top:496.1px;width:74px;height:26px;line-height:26px;"><span style="display:inline-block;transform:scaleX(0.92);transform-origin:50% 50%">846</span></div>
<div class="t" style="left:1005px;top:496.1px;height:26px;line-height:26px;"><span style="display:inline-block;transform:scaleX(0.88);transform-origin:0 50%">R$</span></div>
<div class="t" style="right:786px;top:496.1px;height:26px;line-height:26px;text-align:right;"><span style="display:inline-block;transform:scaleX(0.92);transform-origin:100% 50%">6,30</span></div>
<div class="t" style="left:1091.5px;top:496.1px;height:26px;line-height:26px;"><span style="display:inline-block;transform:scaleX(0.88);transform-origin:0 50%">R$</span></div>
<div class="t" style="right:693.5px;top:496.1px;height:26px;line-height:26px;text-align:right;"><span style="display:inline-block;transform:scaleX(0.92);transform-origin:100% 50%">5.329,80</span></div>
<div class="t c" style="left:1176px;top:496.1px;width:92px;height:26px;line-height:26px;"><span style="display:inline-block;transform:scaleX(0.92);transform-origin:50% 50%">76</span></div>
<div class="t c" style="left:26px;top:522.1px;width:94px;height:26px;line-height:26px;">24/01/2025</div>
<div class="t c" style="left:120px;top:522.1px;width:106px;height:26px;line-height:26px;"><span style="display:inline-block;transform:scaleX(0.88);transform-origin:50% 50%">PED0016</span></div>
<div class="t c" style="left:226px;top:522.1px;width:120px;height:26px;line-height:26px;">Carla Mendes</div>
<div class="t c" style="left:346px;top:522.1px;width:189px;height:26px;line-height:26px;">Açúcar Refinado (1kg)</div>
<div class="t c" style="left:535px;top:522.1px;width:155px;height:26px;line-height:26px;">Supermercado Amigão</div>
<div class="t c" style="left:690px;top:522.1px;width:130px;height:26px;line-height:26px;">Pix</div>
<div class="t c" style="left:820px;top:522.1px;width:103px;height:26px;line-height:26px;">Entregue</div>
<div class="t c" style="left:923px;top:522.1px;width:74px;height:26px;line-height:26px;"><span style="display:inline-block;transform:scaleX(0.92);transform-origin:50% 50%">785</span></div>
<div class="t" style="left:1005px;top:522.1px;height:26px;line-height:26px;"><span style="display:inline-block;transform:scaleX(0.88);transform-origin:0 50%">R$</span></div>
<div class="t" style="right:786px;top:522.1px;height:26px;line-height:26px;text-align:right;"><span style="display:inline-block;transform:scaleX(0.92);transform-origin:100% 50%">4,70</span></div>
<div class="t" style="left:1091.5px;top:522.1px;height:26px;line-height:26px;"><span style="display:inline-block;transform:scaleX(0.88);transform-origin:0 50%">R$</span></div>
<div class="t" style="right:693.5px;top:522.1px;height:26px;line-height:26px;text-align:right;"><span style="display:inline-block;transform:scaleX(0.92);transform-origin:100% 50%">3.689,50</span></div>
<div class="t c" style="left:1176px;top:522.1px;width:92px;height:26px;line-height:26px;"><span style="display:inline-block;transform:scaleX(0.92);transform-origin:50% 50%">120</span></div>
<div class="t c" style="left:26px;top:548.1px;width:94px;height:26px;line-height:26px;">20/02/2025</div>
<div class="t c" style="left:120px;top:548.1px;width:106px;height:26px;line-height:26px;"><span style="display:inline-block;transform:scaleX(0.88);transform-origin:50% 50%">PED0017</span></div>
<div class="t c" style="left:226px;top:548.1px;width:120px;height:26px;line-height:26px;">Felipe Araújo</div>
<div class="t c" style="left:346px;top:548.1px;width:189px;height:26px;line-height:26px;">Cereal Matinal (300g)</div>
<div class="t c" style="left:535px;top:548.1px;width:155px;height:26px;line-height:26px;">Supermercado Amigão</div>
<div class="t c" style="left:690px;top:548.1px;width:130px;height:26px;line-height:26px;">Pix</div>
<div class="t c" style="left:820px;top:548.1px;width:103px;height:26px;line-height:26px;">Cancelado</div>
<div class="t c" style="left:923px;top:548.1px;width:74px;height:26px;line-height:26px;"><span style="display:inline-block;transform:scaleX(0.92);transform-origin:50% 50%">386</span></div>
<div class="t" style="left:1005px;top:548.1px;height:26px;line-height:26px;"><span style="display:inline-block;transform:scaleX(0.88);transform-origin:0 50%">R$</span></div>
<div class="t" style="right:786px;top:548.1px;height:26px;line-height:26px;text-align:right;"><span style="display:inline-block;transform:scaleX(0.92);transform-origin:100% 50%">8,20</span></div>
<div class="t" style="left:1091.5px;top:548.1px;height:26px;line-height:26px;"><span style="display:inline-block;transform:scaleX(0.88);transform-origin:0 50%">R$</span></div>
<div class="t" style="right:693.5px;top:548.1px;height:26px;line-height:26px;text-align:right;"><span style="display:inline-block;transform:scaleX(0.92);transform-origin:100% 50%">3.165,20</span></div>
<div class="t c" style="left:1176px;top:548.1px;width:92px;height:26px;line-height:26px;"><span style="display:inline-block;transform:scaleX(0.92);transform-origin:50% 50%">130</span></div>
<div style="left:1395.5px;top:89px;width:423px;height:41px;background:#1e7145"></div>
<div style="left:1628px;top:89px;width:1px;height:41px;background:#d7e9de"></div>
<div class="h c" style="left:1396px;top:90px;width:233px;height:41px;line-height:41px">Loja</div>
<div class="h c" style="left:1629px;top:90px;width:190px;height:41px;line-height:41px">Vendedor</div>
<div style="left:1395px;top:130px;width:1px;height:26px;background:#c0c0c0"></div>
<div style="left:1628px;top:130px;width:1px;height:26px;background:#c0c0c0"></div>
<div style="left:1818px;top:89px;width:1px;height:68px;background:#c0c0c0"></div>
<div style="left:1395px;top:156px;width:424px;height:1px;background:#c0c0c0"></div>
<div class="t c" style="left:1396px;top:132.1px;width:233px;height:26px;line-height:26px;">Supermercado Amigão</div>
<div class="t c" style="left:1629px;top:132.1px;width:190px;height:26px;line-height:26px;">Aline Rocha</div>
<div class="t" style="left:1398.5px;top:210.1px;height:26px;line-height:26px;"><span style="display:inline-block;transform:scaleX(0.88);transform-origin:0 50%">PED0004</span></div>
<div class="t" style="left:1398.5px;top:236.1px;height:26px;line-height:26px;"><span style="display:inline-block;transform:scaleX(0.88);transform-origin:0 50%">PED0012</span></div>
<div class="t" style="left:1398.5px;top:262.1px;height:26px;line-height:26px;"><span style="display:inline-block;transform:scaleX(0.88);transform-origin:0 50%">PED0035</span></div>
<div class="t" style="left:1398.5px;top:288.1px;height:26px;line-height:26px;"><span style="display:inline-block;transform:scaleX(0.88);transform-origin:0 50%">PED0040</span></div>
<div class="t" style="left:1398.5px;top:314.1px;height:26px;line-height:26px;"><span style="display:inline-block;transform:scaleX(0.88);transform-origin:0 50%">PED0041</span></div>
<div class="t" style="left:1398.5px;top:340.1px;height:26px;line-height:26px;"><span style="display:inline-block;transform:scaleX(0.88);transform-origin:0 50%">PED0043</span></div>
<div class="t" style="left:1398.5px;top:366.1px;height:26px;line-height:26px;"><span style="display:inline-block;transform:scaleX(0.88);transform-origin:0 50%">PED0048</span></div>
<div class="t" style="left:1398.5px;top:392.1px;height:26px;line-height:26px;"><span style="display:inline-block;transform:scaleX(0.88);transform-origin:0 50%">PED0062</span></div>
<div class="t" style="left:1398.5px;top:418.1px;height:26px;line-height:26px;"><span style="display:inline-block;transform:scaleX(0.88);transform-origin:0 50%">PED0066</span></div>
<div class="t" style="left:1398.5px;top:444.1px;height:26px;line-height:26px;"><span style="display:inline-block;transform:scaleX(0.88);transform-origin:0 50%">PED0068</span></div>
<div class="t" style="left:1398.5px;top:470.1px;height:26px;line-height:26px;"><span style="display:inline-block;transform:scaleX(0.88);transform-origin:0 50%">PED0070</span></div>
<div class="t" style="left:1398.5px;top:496.1px;height:26px;line-height:26px;"><span style="display:inline-block;transform:scaleX(0.88);transform-origin:0 50%">PED0088</span></div>
<div class="t" style="left:1398.5px;top:522.1px;height:26px;line-height:26px;"><span style="display:inline-block;transform:scaleX(0.88);transform-origin:0 50%">PED0089</span></div>
<div style="left:1395px;top:208px;width:234px;height:339px;border:1px solid #5b7db0"></div>
<div style="left:1394px;top:207px;width:236px;height:28.5px;border:2px solid #1e6b42"></div>
<div style="left:1626px;top:232px;width:5px;height:5px;background:#1e6b42;outline:1px solid #fff"></div>
<div style="left:1632.5px;top:174.5px;width:31.5px;height:31px;background:#fff;border:1px solid #5a5a5a;border-radius:6px;box-shadow:0 3px 8px rgba(0,0,0,0.12)"></div>
<svg style="position:absolute;left:1632px;top:174px" width="32" height="32">
<path d="M16.5,7.1 Q17.3,10.7 21,11.5 Q17.3,12.3 16.5,15.8 Q15.7,12.3 12,11.5 Q15.7,10.7 16.5,7.1Z" fill="#333"/>
<path d="M21.7,14.8 Q22.2,17.2 24.7,17.75 Q22.2,18.3 21.7,20.8 Q21.2,18.3 18.7,17.75 Q21.2,17.2 21.7,14.8Z" fill="#333"/>
<g stroke="#333" stroke-width="1.5" stroke-linecap="round">
<line x1="8.6" y1="18.3" x2="11.6" y2="15.4"/>
<line x1="12.5" y1="19.3" x2="14.7" y2="17.4"/>
<line x1="8.6" y1="23.2" x2="10.6" y2="21.4"/>
<line x1="13.6" y1="23" x2="16.5" y2="20.4"/>
</g>
</svg>
<svg style="position:absolute;left:0;top:0" width="1861" height="577">
<rect x="303.5" y="7.8" width="287.3" height="29.3" rx="1.2" fill="none" stroke="#e10d0d" stroke-width="3.6"/>
<line x1="590.8" y1="37.6" x2="1367" y2="211.4" stroke="#e10d0d" stroke-width="3.9"/>
<polygon points="1384,215 1366.7,205.2 1364.2,216.4" fill="#e10d0d"/>
</svg>
</body></html>
